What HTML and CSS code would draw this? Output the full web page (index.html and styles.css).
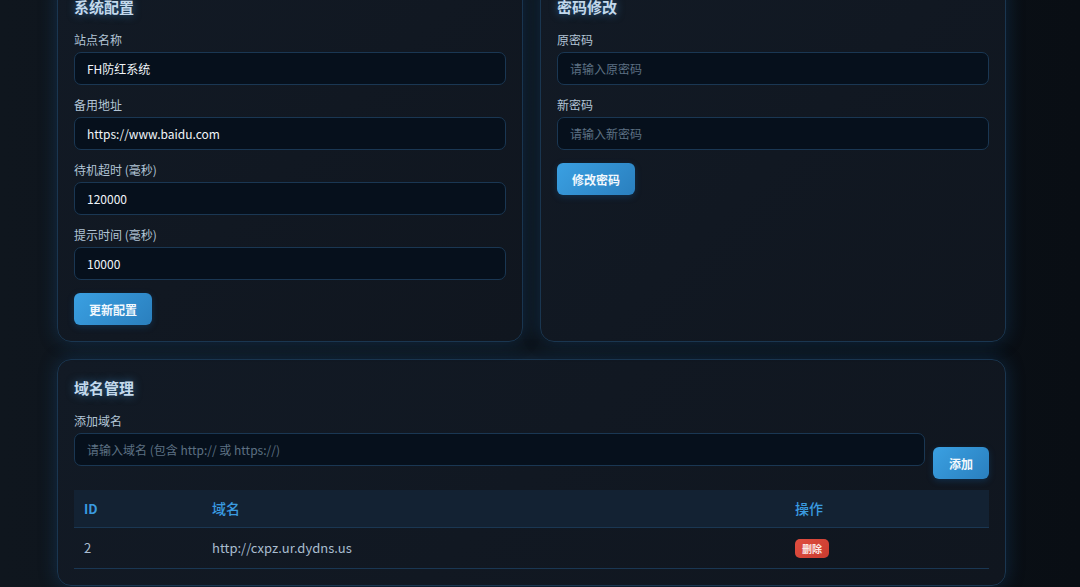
FILE: index.html
```html
<!DOCTYPE html>
<html lang="zh-CN">
<head>
<meta charset="utf-8">
<title>系统设置</title>
<link rel="stylesheet" href="styles.css">
</head>
<body>
<div class="page">
  <div class="grid-two">
    <section class="card">
      <h3 class="card-title">系统配置</h3>
      <div class="form-group">
        <label class="form-label">站点名称</label>
        <input class="form-input" type="text" value="FH防红系统">
      </div>
      <div class="form-group">
        <label class="form-label">备用地址</label>
        <input class="form-input" type="text" value="https://www.baidu.com">
      </div>
      <div class="form-group">
        <label class="form-label">待机超时 (毫秒)</label>
        <input class="form-input" type="text" value="120000">
      </div>
      <div class="form-group">
        <label class="form-label">提示时间 (毫秒)</label>
        <input class="form-input" type="text" value="10000">
      </div>
      <button class="btn">更新配置</button>
    </section>
    <section class="card">
      <h3 class="card-title">密码修改</h3>
      <div class="form-group">
        <label class="form-label">原密码</label>
        <input class="form-input" type="password" placeholder="请输入原密码">
      </div>
      <div class="form-group">
        <label class="form-label">新密码</label>
        <input class="form-input" type="password" placeholder="请输入新密码">
      </div>
      <button class="btn">修改密码</button>
    </section>
  </div>

  <section class="card card-wide">
    <h3 class="card-title">域名管理</h3>
    <div class="form-row">
      <div class="form-group grow">
        <label class="form-label">添加域名</label>
        <input class="form-input" type="text" placeholder="请输入域名 (包含 http:// 或 https://)">
      </div>
      <button class="btn">添加</button>
    </div>
    <table class="table">
      <thead>
        <tr><th class="col-id">ID</th><th class="col-domain">域名</th><th class="col-op">操作</th></tr>
      </thead>
      <tbody>
        <tr><td>2</td><td>http://cxpz.ur.dydns.us</td><td><button class="btn-del">删除</button></td></tr>
      </tbody>
    </table>
  </section>
</div>
</body>
</html>
```
FILE: styles.css
```css
* { box-sizing: border-box; }
html, body { margin: 0; padding: 0; }
body {
  font-family: "Noto Sans CJK SC", "Noto Sans", sans-serif;
  color: #d7e3ee;
  background: linear-gradient(90deg, #0f161e 0%, #0d131a 50%, #090e14 100%);
  min-height: 100vh;
  overflow: hidden;
}
.page {
  width: 949px;
  margin: -22px 0 0 57px;
}
.grid-two {
  display: grid;
  grid-template-columns: 1fr 1fr;
  gap: 17px;
  margin-bottom: 17px;
}
.card {
  background: linear-gradient(135deg, #121a25 0%, #10161f 100%);
  border: 1px solid #1a3650;
  border-radius: 14px;
  padding: 16px;
  box-shadow: 0 0 18px rgba(25, 90, 145, 0.35);
}
.card-title {
  margin: 0 0 14px;
  font-size: 15px;
  line-height: 24px;
  font-weight: 700;
  color: #c3d9ec;
  text-shadow: 0 0 8px rgba(70, 160, 230, 0.55);
}
.form-group { margin-bottom: 13px; }
.form-label {
  display: block;
  font-size: 12px;
  line-height: 14px;
  color: #b2c5d6;
  margin-bottom: 5px;
}
.form-input {
  display: block;
  width: 100%;
  height: 33px;
  padding: 0 12px;
  background: #06101c;
  border: 1px solid #1a3753;
  border-radius: 7px;
  color: #f1f5f9;
  font-family: inherit;
  font-size: 12px;
  font-weight: 400;
  outline: none;
}
.form-input::placeholder { color: #5d7083; }
.btn {
  display: inline-block;
  height: 32px;
  padding: 0 15px;
  border: none;
  border-radius: 6px;
  background: linear-gradient(135deg, #3aa0e2 0%, #2a7fbe 100%);
  color: #f2f8fd;
  font-family: inherit;
  font-size: 12px;
  font-weight: 700;
  box-shadow: 0 2px 6px rgba(20, 90, 150, 0.35);
}
.form-row {
  display: flex;
  align-items: flex-end;
  gap: 8px;
  margin-bottom: 11px;
}
.form-row .btn { padding: 0 16px; }
.grow { flex: 1; }
.table {
  width: 100%;
  border-collapse: collapse;
  table-layout: fixed;
}
.table th {
  background: #132233;
  color: #3a9be0;
  font-size: 13px;
  font-weight: 500;
  line-height: 17px;
  padding: 10px 10px;
  text-align: left;
  border-bottom: 1px solid #1a3753;
}
.table th.col-id { font-weight: 700; }
.col-id { width: 128px; }
.col-domain { font-size: 14px !important; }
.col-op { width: 204px; font-size: 14px !important; }
.table td {
  font-size: 13px;
  line-height: 17px;
  padding: 10px 10px;
  color: #a9bdd0;
  border-bottom: 1px solid #1a3753;
}
.btn-del {
  border: none;
  border-radius: 5px;
  background: linear-gradient(135deg, #e04e40 0%, #c93b2f 100%);
  color: #fbe9e7;
  font-family: inherit;
  font-size: 10px;
  font-weight: 700;
  line-height: 13px;
  padding: 3px 7px;
  vertical-align: middle;
}
```
